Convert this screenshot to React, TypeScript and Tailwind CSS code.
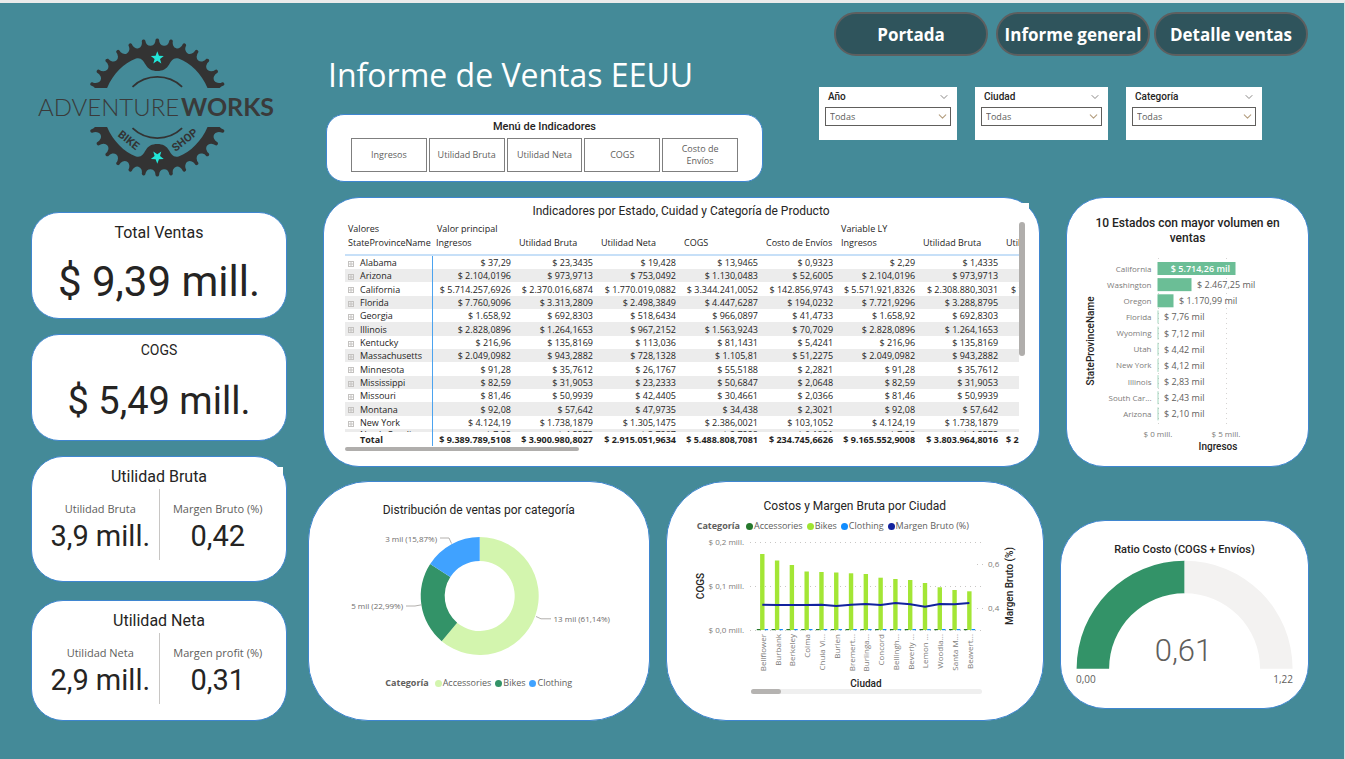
import React, { useId } from "react";
import { ChevronDown } from "lucide-react";

const SANS = "font-['Open_Sans','Noto_Sans',sans-serif]";
const DIN = "font-['Roboto',sans-serif]";
const CARD = "relative bg-white border border-[#3f86d0]";

/* ---------- geometry helpers ---------- */

function polar(cx: number, cy: number, r: number, deg: number): [number, number] {
  const a = ((deg - 90) * Math.PI) / 180;
  return [cx + r * Math.cos(a), cy + r * Math.sin(a)];
}

function ringSlice(cx: number, cy: number, outer: number, inner: number, from: number, to: number) {
  const large = to - from > 180 ? 1 : 0;
  const [x1, y1] = polar(cx, cy, outer, from);
  const [x2, y2] = polar(cx, cy, outer, to);
  const [x3, y3] = polar(cx, cy, inner, to);
  const [x4, y4] = polar(cx, cy, inner, from);
  return `M${x1} ${y1}A${outer} ${outer} 0 ${large} 1 ${x2} ${y2}L${x3} ${y3}A${inner} ${inner} 0 ${large} 0 ${x4} ${y4}Z`;
}

function starPath(cx: number, cy: number, r: number) {
  let d = "";
  for (let i = 0; i < 10; i++) {
    const [x, y] = polar(cx, cy, i % 2 ? r * 0.42 : r, i * 36);
    d += `${i ? "L" : "M"}${x} ${y}`;
  }
  return d + "Z";
}

/* Toothed arc over the top of a circle, closed along its diameter. */
function gearPath(cx: number, cy: number) {
  const step = 11.7;
  const half = 1.5;
  const radius = (deg: number) => 67.8 + 2 * Math.min(1, Math.abs(deg) / 70);
  let d = "";
  for (let i = -7; i <= 7; i++) {
    const [ax, ay] = polar(cx, cy, radius(i * step), i * step - half);
    const [bx, by] = polar(cx, cy, radius(i * step), i * step + half);
    const [nx, ny] = polar(cx, cy, radius((i + 1) * step), (i + 1) * step - half);
    d += `${i === -7 ? `M${ax} ${ay}` : ""}A1.9 1.9 0 0 1 ${bx} ${by}`;
    if (i < 7) d += `A5.2 6.4 ${(i + 0.5) * step} 0 0 ${nx} ${ny}`;
  }
  return d + "Z";
}

/* ---------- logo ---------- */

const GEAR = gearPath(157.3, 107.5);
const HOLE =
  "M107 88.2C113 74 124 63 136 58.6C141 57 143.5 61 145.5 64.5C148 69 152 71 157.3 71C162.600 71 166.600 69 169.100 64.5C171.100 61 173.600 57 178.600 58.6C190.600 63 201.600 74 207.600 88.2V107.5H107Z";

function HalfGear() {
  return (
    <g>
      <path d={`${GEAR}${HOLE}`} fillRule="evenodd" fill="#333" clipPath="url(#upper-half)" />
      <path d="M132.500 86.800A36 36 0 0 1 182.100 86.800" fill="none" stroke="#333" strokeWidth="1.800" />
      <path d={starPath(157.3, 58, 6.8)} fill="#22e6d8" />
    </g>
  );
}

function Logo() {
  return (
    <svg width="248" height="144" viewBox="34 36 248 144" role="img" aria-label="Adventure Works Bike Shop">
      <defs>
        <clipPath id="upper-half">
          <rect x="80" y="36" width="160" height="52" />
        </clipPath>
      </defs>
      <HalfGear />
      <g transform="translate(0 215) scale(1 -1)">
        <HalfGear />
      </g>
      <g fill="#3a3a3a" fontFamily="Lato, sans-serif">
        <text x="38" y="116" fontSize="24" fontWeight="300">
          ADVENTURE
        </text>
        <text x="181" y="116" fontSize="25" fontWeight="700">
          WORKS
        </text>
      </g>
      <g fill="#333" fontFamily="'Liberation Sans Narrow', Roboto, sans-serif" fontWeight="700" fontSize="11" textAnchor="middle">
        <text transform="translate(126.500 143) rotate(38)">BIKE</text>
        <text transform="translate(187 143) rotate(-38)">SHOP</text>
      </g>
    </svg>
  );
}

/* ---------- top area ---------- */

function NavButton({ children, className = "" }: { children: React.ReactNode; className?: string }) {
  return (
    <button
      type="button"
      className={`h-11 w-[154px] rounded-full border-2 border-[#5d5f60] bg-[#2f545c] pt-0.5 text-center text-[17px] leading-[22px] font-bold whitespace-nowrap text-white ${SANS} ${className}`}
    >
      {children}
    </button>
  );
}

function Slicer({ label, className }: { label: string; className: string }) {
  const id = useId();
  return (
    <div className={`h-[53px] bg-white px-1.5 pt-1 ${className}`}>
      <div className="flex h-4 items-start justify-between pl-[3px]">
        <label htmlFor={id} className={`text-[10px] leading-[12px] font-medium text-[#252423] ${DIN}`}>
          {label}
        </label>
        <ChevronDown size={12} strokeWidth={2} className="mr-px text-[#8a8886]" />
      </div>
      <div className="relative">
        <select
          id={id}
          className={`block h-[19px] w-full appearance-none border border-[#605e5c] bg-white pl-1 text-[9px] leading-[16px] text-[#605e5c] ${SANS}`}
        >
          <option>Todas</option>
        </select>
        <ChevronDown size={13} strokeWidth={2} className="pointer-events-none absolute top-[3px] right-0.5 text-[#b59f80]" />
      </div>
    </div>
  );
}

function IndicatorMenu() {
  const items = ["Ingresos", "Utilidad Bruta", "Utilidad Neta", "COGS", "Costo de Envíos"];
  return (
    <section className={`${CARD} mt-4 h-[68px] rounded-[18px] px-6 pt-[5px]`}>
      <h2 className={`text-center text-[11px] leading-[14px] font-medium text-[#252423] ${DIN}`}>Menú de Indicadores</h2>
      <div className="mt-1 flex h-[34px] gap-0.5">
        {items.map((item) => (
          <button
            key={item}
            type="button"
            className={`flex-1 border border-[#7f7f7f] bg-white px-[5px] text-[9px] leading-[12px] text-[#605e5c] ${SANS}`}
          >
            {item}
          </button>
        ))}
      </div>
    </section>
  );
}

/* ---------- KPI cards ---------- */

function DoubleKpi({
  title,
  left,
  right,
  className,
}: {
  title: string;
  left: [string, string];
  right: [string, string];
  className: string;
}) {
  const cell = ([label, value]: [string, string], extra: string) => (
    <div className={`flex flex-1 flex-col items-center ${extra}`}>
      <span className={`text-[11px] leading-[16px] whitespace-nowrap text-[#605e5c] ${SANS}`}>{label}</span>
      <span className={`mt-1 text-[29px] leading-[30px] whitespace-nowrap text-[#252423] ${DIN}`}>{value}</span>
    </div>
  );
  return (
    <section className={`${CARD} rounded-[32px] px-2.5 pt-2.5 ${className}`}>
      <h2 className={`text-center text-base leading-5 text-[#252423] ${DIN}`}>{title}</h2>
      <div className="mt-0.5 flex h-[71px]">
        {cell(left, "border-r border-[#c8c6c4] pt-3")}
        {cell(right, "pt-3")}
      </div>
    </section>
  );
}

/* ---------- matrix ---------- */

const ROWS: string[][] = [
  ["Alabama", "37,29", "23,3435", "19,428", "13,9465", "0,9323", "2,29", "1,4335", ""],
  ["Arizona", "2.104,0196", "973,9713", "753,0492", "1.130,0483", "52,6005", "2.104,0196", "973,9713", ""],
  ["California", "5.714.257,6926", "2.370.016,6874", "1.770.019,0882", "3.344.241,0052", "142.856,9743", "5.571.921,8326", "2.308.880,3031", "1.722.458,1032"],
  ["Florida", "7.760,9096", "3.313,2809", "2.498,3849", "4.447,6287", "194,0232", "7.721,9296", "3.288,8795", ""],
  ["Georgia", "1.658,92", "692,8303", "518,6434", "966,0897", "41,4733", "1.658,92", "692,8303", ""],
  ["Illinois", "2.828,0896", "1.264,1653", "967,2152", "1.563,9243", "70,7029", "2.828,0896", "1.264,1653", ""],
  ["Kentucky", "216,96", "135,8169", "113,036", "81,1431", "5,4241", "216,96", "135,8169", ""],
  ["Massachusetts", "2.049,0982", "943,2882", "728,1328", "1.105,81", "51,2275", "2.049,0982", "943,2882", ""],
  ["Minnesota", "91,28", "35,7612", "26,1767", "55,5188", "2,2821", "91,28", "35,7612", ""],
  ["Mississippi", "82,59", "31,9053", "23,2333", "50,6847", "2,0648", "82,59", "31,9053", ""],
  ["Missouri", "81,46", "50,9939", "42,4405", "30,4661", "2,0366", "81,46", "50,9939", ""],
  ["Montana", "92,08", "57,642", "47,9735", "34,438", "2,3021", "92,08", "57,642", ""],
  ["New York", "4.124,19", "1.738,1879", "1.305,1475", "2.386,0021", "103,1052", "4.124,19", "1.738,1879", ""],
];
const NEXT_ROW = ["North Carolina", "7,28", "4,5573", "3,7287", "2,7228", "0,1821", "7,28", "4,5573", ""];
const TOTALS = ["9.389.789,5108", "3.900.980,8027", "2.915.051,9634", "5.488.808,7081", "234.745,6626", "9.165.552,9008", "3.803.964,8016"];
const HEADS = ["StateProvinceName", "Ingresos", "Utilidad Bruta", "Utilidad Neta", "COGS", "Costo de Envíos", "Ingresos", "Utilidad Bruta", "Utilidad Neta"];

function ExpandIcon() {
  return (
    <svg width="6" height="6" viewBox="0 0 6 6" className="mr-1.5 inline-block align-middle" stroke="#c4c2c0" fill="none">
      <rect x="0.5" y="0.5" width="5" height="5" />
      <path d="M3 1v4M1 3h4" />
    </svg>
  );
}

function Matrix() {
  return (
    <section className={`${CARD} h-[270px] min-w-0 flex-1 rounded-[36px] pt-[6px] pr-[14px] pl-[21px]`}>
      <div className="absolute top-[5px] right-[10px] h-3 w-3 bg-white" />
      <h2 className={`pr-2 text-center text-[12px] leading-[14px] text-[#252423] ${DIN}`}>
        Indicadores por Estado, Cuidad y Categoría de Producto
      </h2>
      <div className="mt-1 flex">
        <div className="min-w-0 flex-1 overflow-hidden">
          <table className={`w-[742px] table-fixed border-separate border-spacing-0 text-[9px] text-[#252423] ${SANS}`}>
            <colgroup>
              <col className="w-[88px]" />
              <col className="w-[83px]" />
              <col className="w-[82px]" />
              <col className="w-[83px]" />
              <col className="w-[82px]" />
              <col className="w-[75px]" />
              <col className="w-[82px]" />
              <col className="w-[83px]" />
              <col className="w-[84px]" />
            </colgroup>
            <thead>
              <tr className="h-[14px] text-left align-top">
                <th className="p-0 pl-[3px] leading-[13px] font-normal">Valores</th>
                <th colSpan={5} className="p-0 pl-1 leading-[13px] font-normal">
                  Valor principal
                </th>
                <th colSpan={3} className="p-0 pl-[3px] leading-[13px] font-normal">
                  Variable LY
                </th>
              </tr>
              <tr className="h-[20px] text-left align-top">
                {HEADS.map((h, i) => (
                  <th
                    key={i}
                    className="border-b-2 border-[#c7e0f8] p-0 pl-[3px] leading-[13px] font-normal whitespace-nowrap"
                  >
                    {h}
                  </th>
                ))}
              </tr>
            </thead>
            <tbody className="[&>tr:nth-child(3n)]:h-[14px]">
              {ROWS.map((row) => (
                <tr key={row[0]} className="h-[13px] even:bg-[#ececec]">
                  <td className="border-r border-[#4ba3ef] p-0 pl-[3px] leading-[13px] whitespace-nowrap">
                    <ExpandIcon />
                    {row[0]}
                  </td>
                  {row.slice(1).map((v, i) => (
                    <td key={i} className="p-0 pr-[5px] text-right leading-[13px] whitespace-nowrap">
                      {v && `$ ${v}`}
                    </td>
                  ))}
                </tr>
              ))}
              <tr className="bg-[#ececec]">
                {NEXT_ROW.map((v, i) => (
                  <td key={i} className="p-0 first:border-r first:border-[#4ba3ef]">
                    <div
                      className={
                        i === 0
                          ? "h-[3px] overflow-hidden pl-[15px] leading-[11px] whitespace-nowrap"
                          : "h-[3px] overflow-hidden pr-[5px] text-right leading-[11px]"
                      }
                    >
                      {i > 0 && v ? `$ ${v}` : v}
                    </div>
                  </td>
                ))}
              </tr>
            </tbody>
            <tfoot>
              <tr className="h-[14px] font-bold">
                <td className="border-r border-[#4ba3ef] p-0 pl-[15px] leading-[13px]">Total</td>
                {TOTALS.map((v, i) => (
                  <td key={i} className="p-0 pr-[5px] text-right leading-[13px] whitespace-nowrap">
                    $ {v}
                  </td>
                ))}
                <td className="p-0 pl-[3px] leading-[13px] whitespace-nowrap">$ 2.843.128,4521</td>
              </tr>
            </tfoot>
          </table>
        </div>
        <div className="w-1.5 shrink-0">
          <div className="h-[134px] w-full rounded-full bg-[#b0aeac]" />
        </div>
      </div>
      <div className="mt-px h-1 w-[234px] rounded-full bg-[#b0aeac]" />
    </section>
  );
}

/* ---------- charts ---------- */

const STATES: { name: string; value: string; w: number }[] = [
  { name: "California", value: "$ 5.714,26 mil", w: 78 },
  { name: "Washington", value: "$ 2.467,25 mil", w: 34 },
  { name: "Oregon", value: "$ 1.170,99 mil", w: 16 },
  { name: "Florida", value: "$ 7,76 mil", w: 1 },
  { name: "Wyoming", value: "$ 7,12 mil", w: 1 },
  { name: "Utah", value: "$ 4,42 mil", w: 1 },
  { name: "New York", value: "$ 4,12 mil", w: 1 },
  { name: "Illinois", value: "$ 2,83 mil", w: 1 },
  { name: "South Car...", value: "$ 2,43 mil", w: 1 },
  { name: "Arizona", value: "$ 2,10 mil", w: 1 },
];

const SVG_SANS = "'Open Sans','Noto Sans',sans-serif";
const SVG_DIN = "Roboto,sans-serif";

function TopStates() {
  return (
    <section className={`${CARD} h-[270px] w-[243px] shrink-0 rounded-[38px] pt-[18px]`}>
      <h2 className={`px-5 text-center text-[12px] leading-[15px] font-medium text-[#252423] ${DIN}`}>
        10 Estados con mayor volumen en ventas
      </h2>
      <svg width="210" height="204" viewBox="1083 252 210 204" className="mx-auto mt-1.5 block" fontFamily={SVG_SANS}>
        <g stroke="#d5d3d1" strokeDasharray="1 4">
          <path d="M1158.500 258V428M1226.500 258V428" />
        </g>
        {STATES.map((s, i) => {
          const y = 262 + i * 16.15;
          return (
            <g key={s.name}>
              <rect x="1157.500" y={y} width={s.w} height="13" fill="#6bbe96" opacity={s.w > 1 ? 1 : 0.6} />
              <text x="1151.500" y={y + 9.5} fontSize="8" fill="#7d7b79" textAnchor="end">
                {s.name}
              </text>
              {i === 0 ? (
                <text x="1230" y={y + 10} fontSize="9" fontWeight="600" fill="#fff" textAnchor="end">
                  {s.value}
                </text>
              ) : (
                <text x={1163 + (s.w > 1 ? s.w : 1)} y={y + 10} fontSize="9" fill="#605e5c">
                  {s.value}
                </text>
              )}
            </g>
          );
        })}
        <g fontSize="8" fill="#7d7b79" textAnchor="middle">
          <text x="1158" y="437">$ 0 mill.</text>
          <text x="1226" y="437">$ 5 mill.</text>
        </g>
        <g fontFamily={SVG_DIN} fontSize="10" fontWeight="500" fill="#252423" textAnchor="middle">
          <text x="1218" y="450">Ingresos</text>
          <text transform="translate(1094 341) rotate(-90)">StateProvinceName</text>
        </g>
      </svg>
    </section>
  );
}

function Legend({ items, className = "" }: { items: { label: string; dot: string }[]; className?: string }) {
  return (
    <div className={`flex items-center justify-center gap-1 text-[9px] leading-[12px] whitespace-nowrap text-[#605e5c] ${SANS} ${className}`}>
      <span className="mr-0.5 font-bold">Categoría</span>
      {items.map((it) => (
        <span key={it.label} className="flex items-center">
          <span className={`h-[7px] w-[7px] rounded-full ${it.dot}`} />
          <span className="ml-px">{it.label}</span>
        </span>
      ))}
    </div>
  );
}

function CategoryDonut() {
  return (
    <section className={`${CARD} h-[240px] flex-[341] rounded-[60px] pt-[20px]`}>
      <h2 className={`text-center text-[12px] leading-4 text-[#252423] ${DIN}`}>Distribución de ventas por categoría</h2>
      <svg width="270" height="140" viewBox="344 526 270 140" className="mx-auto mt-2 block" fontFamily={SVG_SANS}>
        <path d={ringSlice(479.7, 596, 59, 35, 0, 220.1)} fill="#d3f5ae" />
        <path d={ringSlice(479.7, 596, 59, 35, 220.1, 302.9)} fill="#339368" />
        <path d={ringSlice(479.7, 596, 59, 35, 302.9, 360)} fill="#40a2ff" />
        <g fill="none" stroke="#b3b0ad">
          <path d="M440 538h9l2.500 5.500M406 606h9l6.500-1.200M536 616.500l5 2.300h10" />
        </g>
        <g fontSize="8" fill="#6f6d6b">
          <text x="437" y="542" textAnchor="end">3 mil (15,87%)</text>
          <text x="403" y="609" textAnchor="end">5 mil (22,99%)</text>
          <text x="553.500" y="622">13 mil (61,14%)</text>
        </g>
      </svg>
      <Legend
        className="mt-[11px]"
        items={[
          { label: "Accessories", dot: "bg-[#d3f5ae]" },
          { label: "Bikes", dot: "bg-[#339368]" },
          { label: "Clothing", dot: "bg-[#40a2ff]" },
        ]}
      />
    </section>
  );
}

const CITIES: [string, number, number][] = [
  ["Bellflower", 554, 604.7],
  ["Burbank", 560.5, 605],
  ["Berkeley", 565, 605],
  ["Colma", 571.5, 605],
  ["Chula Vi...", 572, 604.7],
  ["Burien", 572.5, 606],
  ["Bremert...", 573.3, 604.7],
  ["Burlinga...", 574, 604],
  ["Concord", 577.7, 605],
  ["Bellingh...", 579, 603],
  ["Beverly ...", 580, 604.3],
  ["Lemon ...", 583, 606.7],
  ["Woodla...", 587.3, 604],
  ["Santa M...", 590, 604.3],
  ["Beavert...", 591.3, 603],
];
const cityX = (i: number) => 762.3 + i * 14.79;

function CityCosts() {
  return (
    <section className={`${CARD} h-[240px] flex-[378] rounded-[60px] pt-[16px]`}>
      <h2 className={`text-center text-[12px] leading-4 text-[#252423] ${DIN}`}>Costos y Margen Bruta por Ciudad</h2>
      <Legend
        className="mt-1.5 pr-11"
        items={[
          { label: "Accessories", dot: "bg-[#25782c]" },
          { label: "Bikes", dot: "bg-[#9fe533]" },
          { label: "Clothing", dot: "bg-[#118dff]" },
          { label: "Margen Bruto (%)", dot: "bg-[#12239e]" },
        ]}
      />
      <svg width="350" height="163" viewBox="680 533 350 163" className="mx-auto mt-px block" fontFamily={SVG_SANS}>
        <g stroke="#c8c6c4" strokeDasharray="1 4">
          <path d="M750 542.500H981M750 586.500H981M750 630.500H981M977 564.500H984M977 608.500H984" />
        </g>
        <g fontSize="8" fill="#7d7b79">
          <text x="744" y="545" textAnchor="end">$ 0,2 mill.</text>
          <text x="744" y="589" textAnchor="end">$ 0,1 mill.</text>
          <text x="744" y="633" textAnchor="end">$ 0,0 mill.</text>
          <text x="988" y="567">0,6</text>
          <text x="988" y="611">0,4</text>
        </g>
        {CITIES.map(([name, top], i) => (
          <g key={name}>
            <rect x={cityX(i) - 2.200} y={top} width="4.400" height={630 - top} fill="#a3e635" />
            <rect x={cityX(i) - 5.500} y="629" width="3.600" height="1.200" fill="#25782c" />
            <rect x={cityX(i) + 2.200} y="629" width="3.600" height="1.200" fill="#118dff" />
            <text transform={`translate(${cityX(i) + 3.500} 634) rotate(-90)`} fontSize="8" fill="#7d7b79" textAnchor="end">
              {name}
            </text>
          </g>
        ))}
        <polyline points={CITIES.map(([, , y], i) => `${cityX(i)},${y}`).join(" ")} fill="none" stroke="#12239e" strokeWidth="2" />
        <g fontFamily={SVG_DIN} fontSize="10" fontWeight="500" fill="#252423" textAnchor="middle">
          <text x="866" y="687">Ciudad</text>
          <text transform="translate(703.500 586) rotate(-90)">COGS</text>
          <text transform="translate(1013 586) rotate(-90)">Margen Bruto (%)</text>
        </g>
        <rect x="751" y="689" width="231" height="5" rx="2.500" fill="#efefef" />
        <rect x="751" y="689" width="30" height="5" rx="2.500" fill="#b5b3b1" />
      </svg>
    </section>
  );
}

function CostRatio() {
  return (
    <section className={`${CARD} mt-[39px] h-[189px] w-[249px] shrink-0 rounded-[45px] pt-[21px]`}>
      <h2 className={`text-center text-[11px] leading-4 font-medium text-[#252423] ${DIN}`}>Ratio Costo (COGS + Envíos)</h2>
      <svg width="225" height="130" viewBox="1072 558 225 130" className="mx-auto block">
        <path d={ringSlice(1184.6, 668.7, 108, 75.5, -90, 0)} fill="#339368" />
        <path d={ringSlice(1184.6, 668.7, 108, 75.5, 0, 90)} fill="#f3f2f1" />
        <text x="1183.500" y="661" fontSize="31" fontWeight="300" textAnchor="middle" fill="#605e5c" fontFamily={SVG_DIN}>
          0,61
        </text>
        <g fontFamily={SVG_SANS} fontSize="10" fill="#605e5c">
          <text x="1076" y="683">0,00</text>
          <text x="1293" y="683" textAnchor="end">1,22</text>
        </g>
      </svg>
    </section>
  );
}

/* ---------- page ---------- */

export default function App() {
  return (
    <div className="min-h-screen border-t-[3px] border-r border-t-[#ebebeb] border-r-[#d5dcde] bg-[#448a98]">
      <div className="flex gap-[21px] pr-[35px] pb-8 pl-[31px]">
        <aside className="w-64 shrink-0">
          <div className="mt-[33px] ml-[3px]">
            <Logo />
          </div>
          <section className={`${CARD} mt-8 h-[107px] rounded-[28px] pt-2.5 text-center text-[#252423] ${DIN}`}>
            <h2 className="text-base leading-5">Total Ventas</h2>
            <p className="mt-[15px] text-[42px] leading-[48px]">$ 9,39 mill.</p>
          </section>
          <section className={`${CARD} mt-[15px] h-[107px] rounded-[28px] pt-[6px] text-center text-[#252423] ${DIN}`}>
            <h2 className="text-sm leading-[18px]">COGS</h2>
            <p className="mt-[18px] text-[38px] leading-[48px]">$ 5,49 mill.</p>
          </section>
          <DoubleKpi
            title="Utilidad Bruta"
            left={["Utilidad Bruta", "3,9 mill."]}
            right={["Margen Bruto (%)", "0,42"]}
            className="mt-[15px] h-[126px] before:absolute before:top-[10px] before:right-[3px] before:h-3 before:w-3 before:bg-white"
          />
          <DoubleKpi
            title="Utilidad Neta"
            left={["Utilidad Neta", "2,9 mill."]}
            right={["Margen profit (%)", "0,31"]}
            className="mt-[18px] h-[121px]"
          />
        </aside>

        <main className="min-w-0 flex-1">
          <header className="flex justify-between pl-[18px]">
            <div className="w-[437px] pt-[49px]">
              <h1 className={`pl-[2px] text-[32px] leading-[46px] whitespace-nowrap text-white ${SANS}`}>Informe de Ventas EEUU</h1>
              <IndicatorMenu />
            </div>
            <div className="pt-[9px]">
              <nav className="flex justify-end gap-1 pr-px">
                <NavButton className="mr-1">Portada</NavButton>
                <NavButton>Informe general</NavButton>
                <NavButton>Detalle ventas</NavButton>
              </nav>
              <div className="mt-[31px] flex gap-[18px] pr-[47px]">
                <Slicer label="Año" className="w-[138px]" />
                <Slicer label="Ciudad" className="w-[133px]" />
                <Slicer label="Categoría" className="w-[136px]" />
              </div>
            </div>
          </header>
          <div className="mt-[15px] flex gap-[26px] pl-[15px]">
            <Matrix />
            <TopStates />
          </div>
          <div className="mt-[14px] flex items-start gap-4">
            <CategoryDonut />
            <CityCosts />
            <CostRatio />
          </div>
        </main>
      </div>
    </div>
  );
}
